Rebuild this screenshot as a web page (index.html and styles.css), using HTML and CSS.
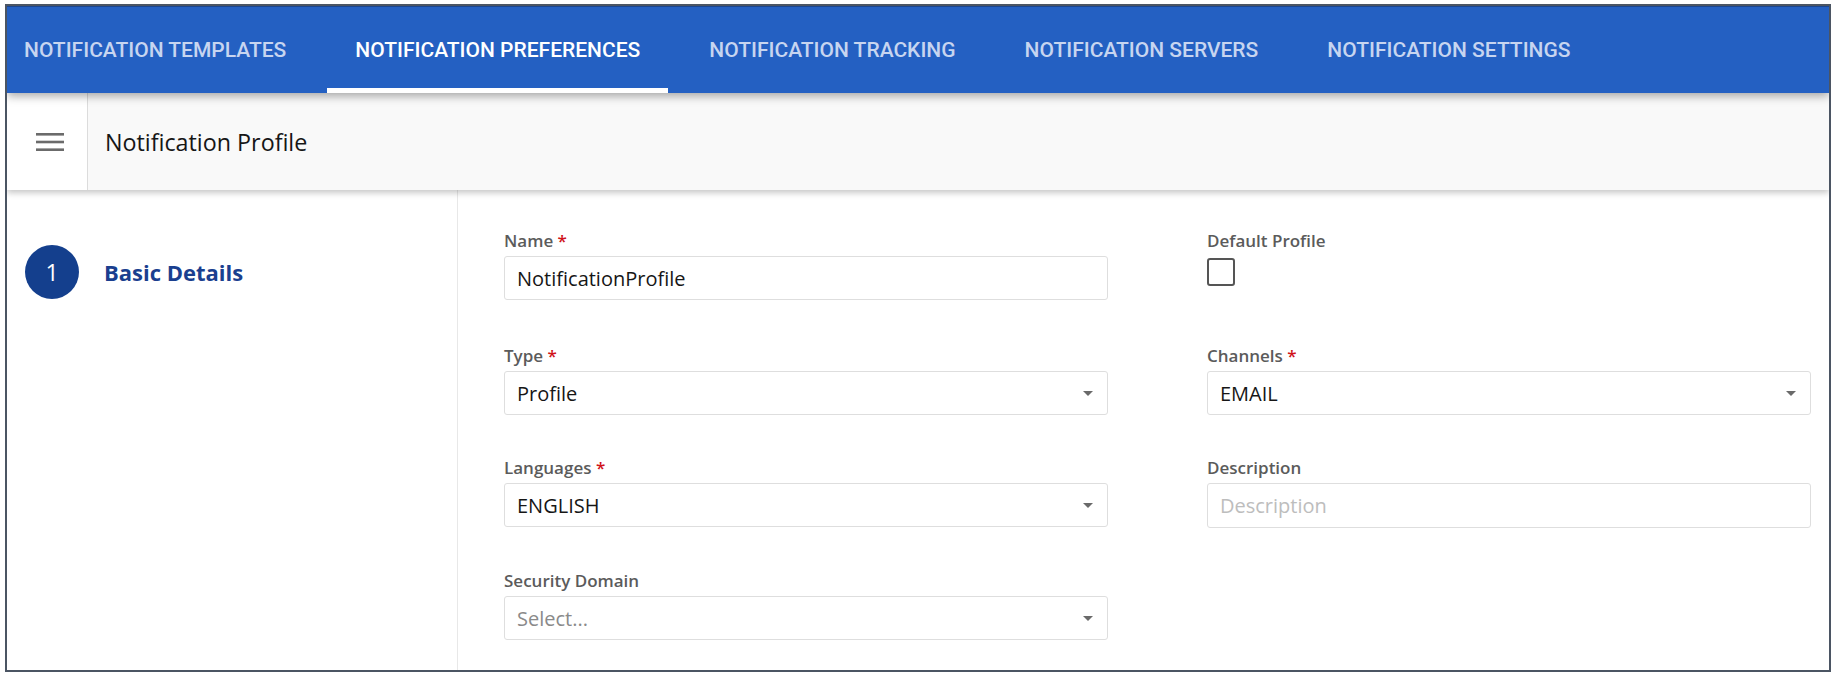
FILE: index.html
```html
<!DOCTYPE html>
<html lang="en">
<head>
<meta charset="utf-8">
<title>Notification Profile</title>
<link rel="stylesheet" href="styles.css">
</head>
<body>
<div class="frame">
  <nav class="tabs">
    <div class="tab first">NOTIFICATION TEMPLATES</div>
    <div class="tab active">NOTIFICATION PREFERENCES</div>
    <div class="tab">NOTIFICATION TRACKING</div>
    <div class="tab">NOTIFICATION SERVERS</div>
    <div class="tab">NOTIFICATION SETTINGS</div>
  </nav>
  <header class="header">
    <div class="menu-cell">
      <svg class="menu-icon" width="28" height="20" viewBox="0 0 28 20">
        <rect x="0" y="1" width="28" height="2.6" fill="#6b6b6b"/>
        <rect x="0" y="8.7" width="28" height="2.6" fill="#6b6b6b"/>
        <rect x="0" y="16.4" width="28" height="2.6" fill="#6b6b6b"/>
      </svg>
    </div>
    <div class="title">Notification Profile</div>
  </header>
  <main class="content">
    <aside class="steps">
      <div class="step">
        <div class="step-num">1</div>
        <div class="step-label">Basic Details</div>
      </div>
    </aside>
    <section class="form">
      <div class="field">
        <div class="label">Name <span class="req">*</span></div>
        <div class="input">NotificationProfile</div>
      </div>
      <div class="field">
        <div class="label">Default Profile</div>
        <div class="checkbox"></div>
      </div>
      <div class="field row2">
        <div class="label">Type <span class="req">*</span></div>
        <div class="input select">Profile<span class="caret"></span></div>
      </div>
      <div class="field row2">
        <div class="label">Channels <span class="req">*</span></div>
        <div class="input select">EMAIL<span class="caret"></span></div>
      </div>
      <div class="field">
        <div class="label">Languages <span class="req">*</span></div>
        <div class="input select">ENGLISH<span class="caret"></span></div>
      </div>
      <div class="field">
        <div class="label">Description</div>
        <div class="input desc placeholder-light">Description</div>
      </div>
      <div class="field">
        <div class="label">Security Domain</div>
        <div class="input select placeholder">Select...<span class="caret"></span></div>
      </div>
    </section>
  </main>
</div>
</body>
</html>
```

FILE: styles.css
```css
* {
  box-sizing: border-box;
}

html, body {
  margin: 0;
  padding: 0;
  background: #ffffff;
}

body {
  font-family: "Open Sans", "Noto Sans", sans-serif;
  color: #161616;
}

.frame {
  margin: 4px 0 0 5px;
  width: 1826px;
  height: 668px;
  border: 2px solid #4b5563;
  overflow: hidden;
  display: flex;
  flex-direction: column;
  background: #ffffff;
}

.tabs {
  position: relative;
  z-index: 3;
  flex: 0 0 87px;
  display: flex;
  align-items: stretch;
  background: #2460c2;
  border-top: 1px solid #1c4690;
  box-shadow: 0 3px 9px rgba(0, 0, 0, 0.35);
  column-gap: 13px;
}

.tab {
  display: flex;
  align-items: center;
  padding: 0 28px;
  font-family: Roboto, "Open Sans", sans-serif;
  font-weight: 500;
  font-size: 21px;
  color: #c7d5f0;
  white-space: nowrap;
}

.tab.first {
  padding-left: 17px;
}

.tab.active {
  color: #ffffff;
  box-shadow: inset 0 -5px 0 #ffffff;
}

.header {
  position: relative;
  z-index: 2;
  flex: 0 0 97px;
  display: flex;
  align-items: stretch;
  background: #f9f9f9;
  box-shadow: 0 3px 6px rgba(0, 0, 0, 0.22);
}

.menu-cell {
  width: 81px;
  display: flex;
  align-items: center;
  justify-content: center;
  background: #ffffff;
  border-right: 1px solid #dcdcdc;
}

.menu-icon {
  display: block;
  margin-left: 5px;
}

.title {
  display: flex;
  align-items: center;
  padding-left: 17px;
  font-size: 23.3px;
  color: #161616;
}

.content {
  flex: 1 1 auto;
  display: flex;
  min-height: 0;
}

.steps {
  width: 451px;
  flex: 0 0 451px;
  border-right: 1px solid #e8e8e8;
  padding: 55px 0 0 18px;
}

.step {
  display: flex;
  align-items: center;
  column-gap: 25px;
}

.step-num {
  width: 54px;
  height: 54px;
  border-radius: 50%;
  background: #143f8d;
  color: #ffffff;
  display: flex;
  align-items: center;
  justify-content: center;
  font-size: 23px;
}

.step-label {
  font-size: 22px;
  font-weight: 700;
  color: #1a3f8f;
}

.form {
  padding: 41px 0 0 46px;
  display: grid;
  grid-template-columns: 604px 604px;
  column-gap: 99px;
  row-gap: 43px;
  align-content: start;
}

.field {
  display: flex;
  flex-direction: column;
  row-gap: 5px;
}

.field.row2 {
  margin-top: 3px;
}

.label {
  height: 20px;
  line-height: 20px;
  font-size: 17px;
  font-weight: 600;
  color: #5b5b5b;
}

.req {
  color: #d0131a;
}

.input {
  position: relative;
  height: 44px;
  display: flex;
  align-items: center;
  padding: 0 12px;
  border: 1px solid #dedede;
  border-radius: 3px;
  font-size: 20px;
  color: #161616;
  background: #ffffff;
}

.input.desc {
  height: 45px;
}

.placeholder {
  color: #8a8a8a;
}

.placeholder-light {
  color: #bdbdbd;
}

.caret {
  position: absolute;
  right: 14px;
  top: 50%;
  margin-top: -2px;
  width: 0;
  height: 0;
  border-left: 5px solid transparent;
  border-right: 5px solid transparent;
  border-top: 5px solid #6a6a6a;
}

.checkbox {
  margin-top: 2px;
  width: 28px;
  height: 28px;
  border: 2px solid #555555;
  border-radius: 3px;
  background: #ffffff;
}
```
